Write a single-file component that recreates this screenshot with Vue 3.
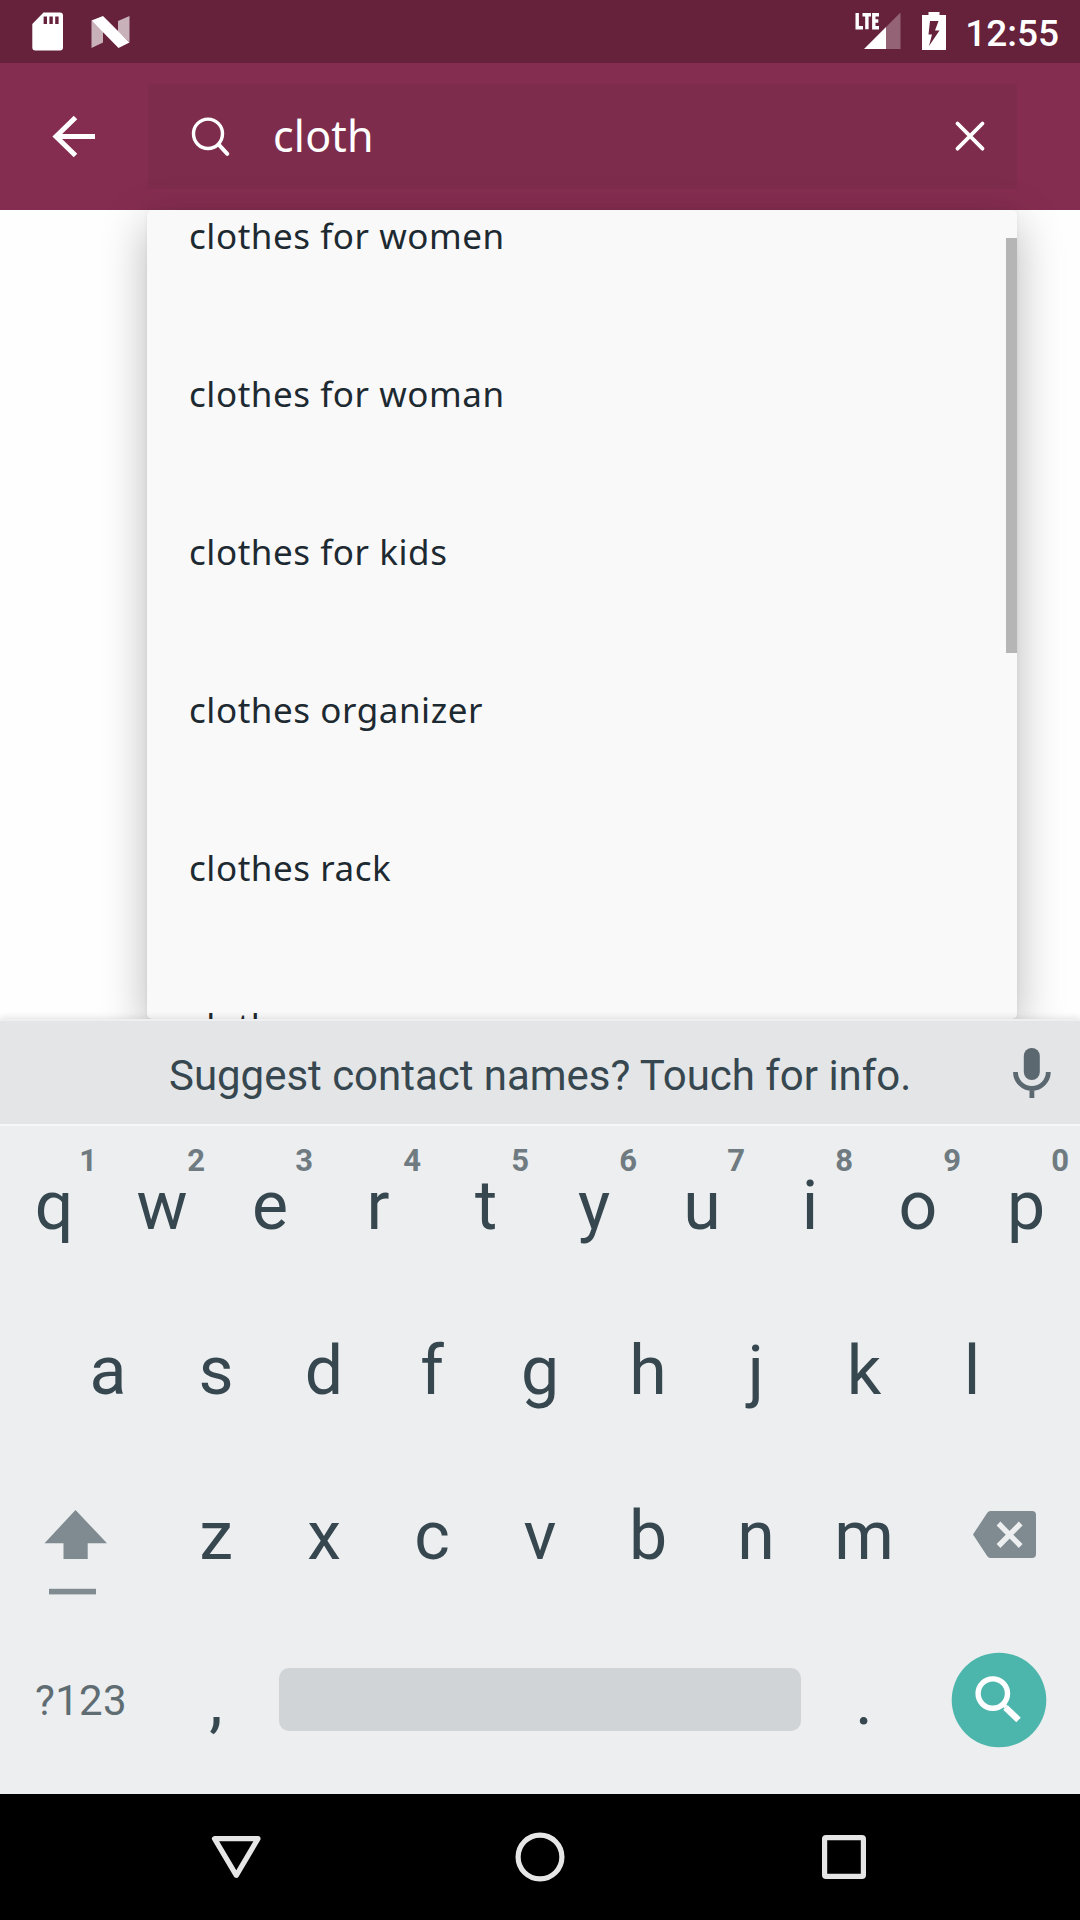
<script setup>
const suggestions = [
  'clothes for women',
  'clothes for woman',
  'clothes for kids',
  'clothes organizer',
  'clothes rack',
  'clothes',
]
const topRow = [...'qwertyuiop'].map((letter, i) => ({ letter, hint: (i + 1) % 10 }))
const homeRow = [...'asdfghjkl']
const bottomRow = [...'zxcvbnm']
</script>

<template>
  <div class="screen">
    <header class="status">
      <svg class="sd" width="34" height="42" viewBox="31 10 34 42">
        <path fill="#fff" fill-rule="evenodd" d="M43.5 12.5H60a3 3 0 0 1 3 3V47.500a3 3 0 0 1-3 3H35.300a3 3 0 0 1-3-3V24zM43.600 16.500v7.500h3.400v-7.500zM49.400 16.500v7.500h3.400v-7.500zM55.200 16.500v7.500h3.400v-7.500z" />
      </svg>
      <svg class="nougat" width="42" height="36" viewBox="90 14 42 36">
        <path fill="#fff" fill-opacity=".65" d="M91.500 20.500L103 31.500V42.500L91.500 48zM129.500 16L118 21V31.500L129.500 42z" />
        <path fill="#fff" d="M91.500 20.500L103 16L129.500 42.500L118.500 48z" />
      </svg>
      <div class="status-right">
        <svg class="signal" width="50" height="42" viewBox="853 10 50 42">
          <path fill="#fff" fill-opacity=".3" d="M900.500 12.500V49H886V27z" />
          <path fill="#fff" d="M864 49L886 27V49z" />
          <path fill="none" stroke="#fff" stroke-width="3.400" d="M857.200 13V27.700H863M862.500 14.800H871M866.900 14.800V29.300M879 14.800H873.800V27.700H879M873.800 21H878.300" />
        </svg>
        <svg class="battery" width="26" height="42" viewBox="921 10 26 42">
          <path fill="#fff" fill-rule="evenodd" d="M928.500 12h11v3h6.500v35h-24V15h6.500zM930 21L928.500 34.500H932L929 46L939.500 30.500H935L938.500 21z" />
        </svg>
        <span class="clock">12:55</span>
      </div>
    </header>

    <div class="appbar">
      <svg class="back" width="46" height="47" viewBox="51 113 46 47">
        <path fill="none" stroke="#fff" stroke-width="5" d="M75.500 117.500L56 136.500L75.500 155.500M56 136.500H95" />
      </svg>
      <div class="field">
        <svg class="lens" width="42" height="43" viewBox="190 115 42 43">
          <ellipse cx="208" cy="133.800" rx="14.500" ry="14.700" fill="none" stroke="#fff" stroke-width="3.400" />
          <path d="M219 144.800L227.300 153.800" stroke="#fff" stroke-width="4" stroke-linecap="round" />
        </svg>
        <span class="query">cloth</span>
        <svg class="clear" width="34" height="35" viewBox="953 119 34 35">
          <path d="M957.500 123.500L982.500 148.700M982.500 123.500L957.500 148.700" stroke="#fff" stroke-width="3.800" stroke-linecap="round" />
        </svg>
      </div>
    </div>

    <main class="page">
      <div class="dropdown">
        <ul class="list">
          <li v-for="s in suggestions" :key="s"><span>{{ s }}</span></li>
        </ul>
        <div class="scrollbar"></div>
      </div>
    </main>

    <section class="keyboard">
      <div class="strip">
        <span class="notice">Suggest contact names? Touch for info.</span>
        <svg class="mic" width="42" height="54" viewBox="1011 1045 42 54">
          <rect x="1023.800" y="1047" width="16" height="32" rx="8" fill="#5b6870" />
          <path d="M1015.500 1071a16.400 16.400 0 0 0 32.800 0M1031.900 1087V1097" fill="none" stroke="#5b6870" stroke-width="4.800" />
        </svg>
      </div>
      <div class="keys">
        <div class="row">
          <div v-for="k in topRow" :key="k.letter" class="key">
            {{ k.letter }}<span class="hint">{{ k.hint }}</span>
          </div>
        </div>
        <div class="row">
          <div v-for="k in homeRow" :key="k" class="key">{{ k }}</div>
        </div>
        <div class="row">
          <div class="key wide">
            <svg width="162" height="160" viewBox="0 1456 162 160" fill="#7f8b90">
              <path d="M75.500 1510L107 1543.300H87.700V1559H63.500V1543.300H44.500z" />
              <rect x="49" y="1588.800" width="47" height="5.600" />
            </svg>
          </div>
          <div v-for="k in bottomRow" :key="k" class="key">{{ k }}</div>
          <div class="key wide">
            <svg width="162" height="160" viewBox="918 1456 162 160">
              <path fill="#7f8b90" d="M990.500 1511H1032a4 4 0 0 1 4 4V1554a4 4 0 0 1-4 4H990.500a4 4 0 0 1-3.200-1.800L973 1534.500L987.300 1512.800a4 4 0 0 1 3.200-1.800z" />
              <path stroke="#eceef0" stroke-width="5.400" d="M998.500 1523.500L1020.700 1546M1020.700 1523.500L998.500 1546" />
            </svg>
          </div>
        </div>
        <div class="row">
          <div class="key wide symbols">?123</div>
          <div class="key">,</div>
          <div class="key space"><div class="bar"></div></div>
          <div class="key">.</div>
          <div class="key wide">
            <svg width="162" height="160" viewBox="918 1621 162 160">
              <circle cx="999" cy="1700" r="47.300" fill="#4db6ac" />
              <circle cx="992.800" cy="1693.600" r="14.700" fill="none" stroke="#fff" stroke-width="5.400" />
              <path d="M1003 1704L1006 1707" stroke="#fff" stroke-width="4" />
              <path d="M1005.500 1707.500L1018.500 1720" stroke="#fff" stroke-width="6.500" />
            </svg>
          </div>
        </div>
      </div>
    </section>

    <nav class="navbar">
      <svg width="56" height="56" viewBox="208 1829 56 56">
        <path d="M214.500 1838.700H258L236.300 1875.300z" fill="none" stroke="#e6e6e6" stroke-width="5.200" stroke-linejoin="round" />
      </svg>
      <svg width="56" height="56" viewBox="512 1829 56 56">
        <circle cx="540" cy="1857" r="21.900" fill="none" stroke="#e6e6e6" stroke-width="5.200" />
      </svg>
      <svg width="56" height="56" viewBox="816 1829 56 56">
        <rect x="824.600" y="1837.600" width="38.800" height="38.800" rx="1.500" fill="none" stroke="#e6e6e6" stroke-width="5.200" />
      </svg>
    </nav>
  </div>
</template>

<style>
body {
  margin: 0;
  background: #000;
}
</style>

<style scoped>
.screen {
  width: 1080px;
  height: 1920px;
  display: flex;
  flex-direction: column;
  overflow: hidden;
  font-family: Roboto, "Liberation Sans", sans-serif;
}
svg {
  display: block;
  flex: none;
}
.status {
  height: 63px;
  box-sizing: border-box;
  padding: 10px 21px 0 31px;
  display: flex;
  align-items: flex-start;
  background: #66213b;
}
.nougat {
  margin: 4px 0 0 25px;
}
.status-right {
  margin-left: auto;
  display: flex;
}
.battery {
  margin-left: 18px;
}
.clock {
  margin: 1px 0 0 18px;
  line-height: 46px;
  font-size: 37px;
  font-weight: 500;
  color: #fff;
}
.appbar {
  height: 147px;
  box-sizing: border-box;
  padding: 0 63px 0 51px;
  display: flex;
  align-items: center;
  background: #852d50;
}
.field {
  flex: 1;
  height: 105px;
  margin-left: 51px;
  display: flex;
  align-items: center;
  background: #7e2c4b;
}
.lens {
  margin-left: 42px;
}
.query {
  margin-left: 41px;
  flex: 1;
  line-height: 103px;
  padding-bottom: 2px;
  font-family: "Noto Sans", sans-serif;
  font-size: 43px;
  letter-spacing: 0.2px;
  color: #fff;
}
.clear {
  margin-right: 30px;
}
.page {
  height: 809px;
  padding: 0 63px 0 147px;
  background: #fefefe;
}
.dropdown {
  position: relative;
  height: 809px;
  overflow: hidden;
  border-radius: 5px;
  background: #f9f9f9;
  box-shadow: 0 14px 46px rgba(0, 0, 0, 0.28), 0 0 4px rgba(0, 0, 0, 0.05);
}
.list {
  margin: -53px 0 0;
  padding: 0 0 0 42px;
  list-style: none;
}
.list li {
  height: 158px;
  line-height: 158px;
  font-family: "Noto Sans", sans-serif;
  font-size: 35px;
  letter-spacing: 0.55px;
  color: #1e2a31;
  white-space: nowrap;
}
.scrollbar {
  position: absolute;
  top: 28px;
  right: 0;
  width: 11px;
  height: 415px;
  background: #b5b5b5;
}
.keyboard {
  position: relative;
  height: 775px;
  background: #eceef0;
  box-shadow: 0 -1px 7px rgba(0, 0, 0, 0.12);
}
.strip {
  height: 107px;
  box-sizing: border-box;
  border-top: 2px solid #eeeff0;
  border-bottom: 2px solid #f6f7f8;
  padding: 0 27px 0 169px;
  display: flex;
  align-items: center;
  justify-content: space-between;
  background: #e3e5e7;
}
.notice {
  padding-top: 6px;
  font-size: 42px;
  line-height: 97px;
  letter-spacing: -0.03px;
  color: #37474f;
  white-space: nowrap;
}
.keys {
  display: flex;
  flex-direction: column;
  gap: 5px;
}
.row {
  display: flex;
  justify-content: center;
}
.key {
  position: relative;
  width: 108px;
  height: 160px;
  line-height: 160px;
  font-size: 68px;
  text-align: center;
  color: #37474f;
}
.wide {
  width: 162px;
}
.symbols {
  font-size: 42px;
  letter-spacing: 0.3px;
  color: #5f6d73;
}
.hint {
  position: absolute;
  top: 15px;
  right: 11px;
  font-size: 31px;
  line-height: 40px;
  font-weight: 700;
  color: #6f7b80;
}
.space {
  width: 540px;
  display: flex;
  align-items: center;
  justify-content: center;
}
.bar {
  width: 522px;
  height: 63px;
  margin-top: -3px;
  border-radius: 10px;
  background: #d0d4d7;
}
.navbar {
  height: 126px;
  display: flex;
  align-items: center;
  justify-content: center;
  gap: 248px;
  background: #000;
}
</style>
